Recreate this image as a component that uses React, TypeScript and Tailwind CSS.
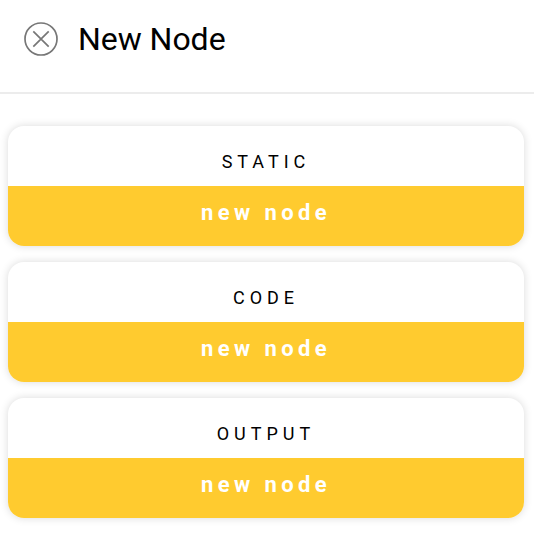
const sections = ["STATIC", "CODE", "OUTPUT"];

function CloseIcon() {
  return (
    <svg width="34" height="34" viewBox="0 0 34 34" fill="none" stroke="#777" strokeWidth="1.7">
      <circle cx="17" cy="17" r="16" />
      <path d="M9.3 9.3l15.4 15.4M24.7 9.3l-15.4 15.4" />
    </svg>
  );
}

function NodeCard({ title }: { title: string }) {
  return (
    <section className="h-[120px] overflow-hidden rounded-[16px] bg-white shadow-[0_0_8px_rgba(0,0,0,0.15)]">
      <h2 className="h-[60px] pt-[24px] text-center text-[18px] leading-[24px] tracking-[5px] text-black">
        {title}
      </h2>
      <button className="block h-[60px] w-full bg-[#ffcb2f] pb-[6px] text-center text-[22px] font-bold leading-[26px] tracking-[4.4px] text-white">
        new node
      </button>
    </section>
  );
}

export default function App() {
  return (
    <main className="h-[552px] w-[534px] overflow-hidden bg-white font-[Roboto,sans-serif]">
      <header className="flex h-[94px] items-start border-b-2 border-[#ececec] pl-[24px] pt-[22px]">
        <button aria-label="Close"><CloseIcon /></button>
        <h1 className="ml-[20px] text-[32px] leading-[34px] tracking-[-0.04px] text-black">New Node</h1>
      </header>
      <div className="flex flex-col gap-[16px] pl-[8px] pr-[10px] pt-[32px]">
        {sections.map((title) => <NodeCard key={title} title={title} />)}
      </div>
    </main>
  );
}
